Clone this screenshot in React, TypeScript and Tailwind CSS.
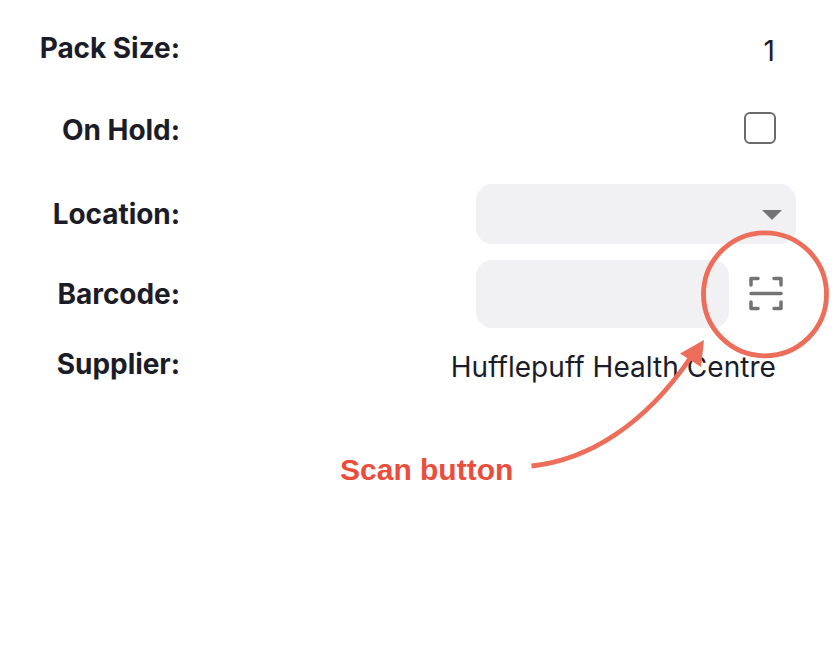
import React from "react";

function Label({ children, className }: { children: React.ReactNode; className: string }) {
  return <div className={`w-[180px] shrink-0 whitespace-nowrap text-right text-[28px] leading-8 font-bold tracking-[-0.05px] ${className}`}>{children}</div>;
}

export default function App() {
  return (
    <main className="relative h-[666px] w-[838px] overflow-hidden bg-white font-['Inter',sans-serif] text-[#1c1c28]">
      <div className="flex h-[92px] justify-between pr-[62px] pt-8">
        <Label className="">Pack Size:</Label>
        <span className="mt-[3px] pr-px text-[28px] leading-8">1</span>
      </div>
      <div className="flex h-[92px] justify-between pr-[62px] pt-[20px]">
        <Label className="mt-0.5">On Hold:</Label>
        <span className="h-8 w-8 rounded-[6px] border-2 border-[#6b6b6b]" />
      </div>
      <div className="flex h-[76px] justify-between pr-[42px]">
        <Label className="mt-[14px]">Location:</Label>
        <div className="flex h-[60px] w-[320px] items-center justify-end rounded-2xl bg-[#f1f1f4] pr-[14px]">
          <svg width="20" height="10" className="mt-0.5" viewBox="0 0 20 10"><path d="M0 0h20L10 10z" fill="#737373" /></svg>
        </div>
      </div>
      <div className="flex h-[68px]">
        <Label className="mt-[18px]">Barcode:</Label>
        <div className="ml-[296px] h-[68px] w-[253px] rounded-2xl bg-[#f1f1f4]" />
        <svg className="ml-5 mt-4" width="35" height="35" viewBox="0 0 35 35" fill="none" stroke="#737373" strokeWidth="3.5" strokeLinecap="round" strokeLinejoin="round">
          <path d="M2 9V2.5h7M25 2.5h7V9M32 26v6.5h-7M9 32.5H2V26M2 17.5h30" />
        </svg>
      </div>
      <div className="flex justify-between pr-[62px] pt-5">
        <Label className="">Supplier:</Label>
        <span className="mt-[3px] text-[28px] leading-8 tracking-[0.05px]">Hufflepuff Health Centre</span>
      </div>
      <svg className="absolute inset-0" width="838" height="666" viewBox="0 0 838 666" fill="none" stroke="#ec6d5a" strokeWidth="4.8">
        <circle cx="765" cy="294.3" r="61.5" />
        <path d="M531.5 466C588 460 645 425 691 357" />
        <path d="M704 340L680 353.5L701 367Z" fill="#ec6d5a" stroke="none" />
      </svg>
      <span className="absolute left-[340px] top-[453px] whitespace-nowrap font-['Liberation_Sans',sans-serif] text-[30px] leading-[34px] font-bold text-[#eb4d3d]">Scan button</span>
    </main>
  );
}
